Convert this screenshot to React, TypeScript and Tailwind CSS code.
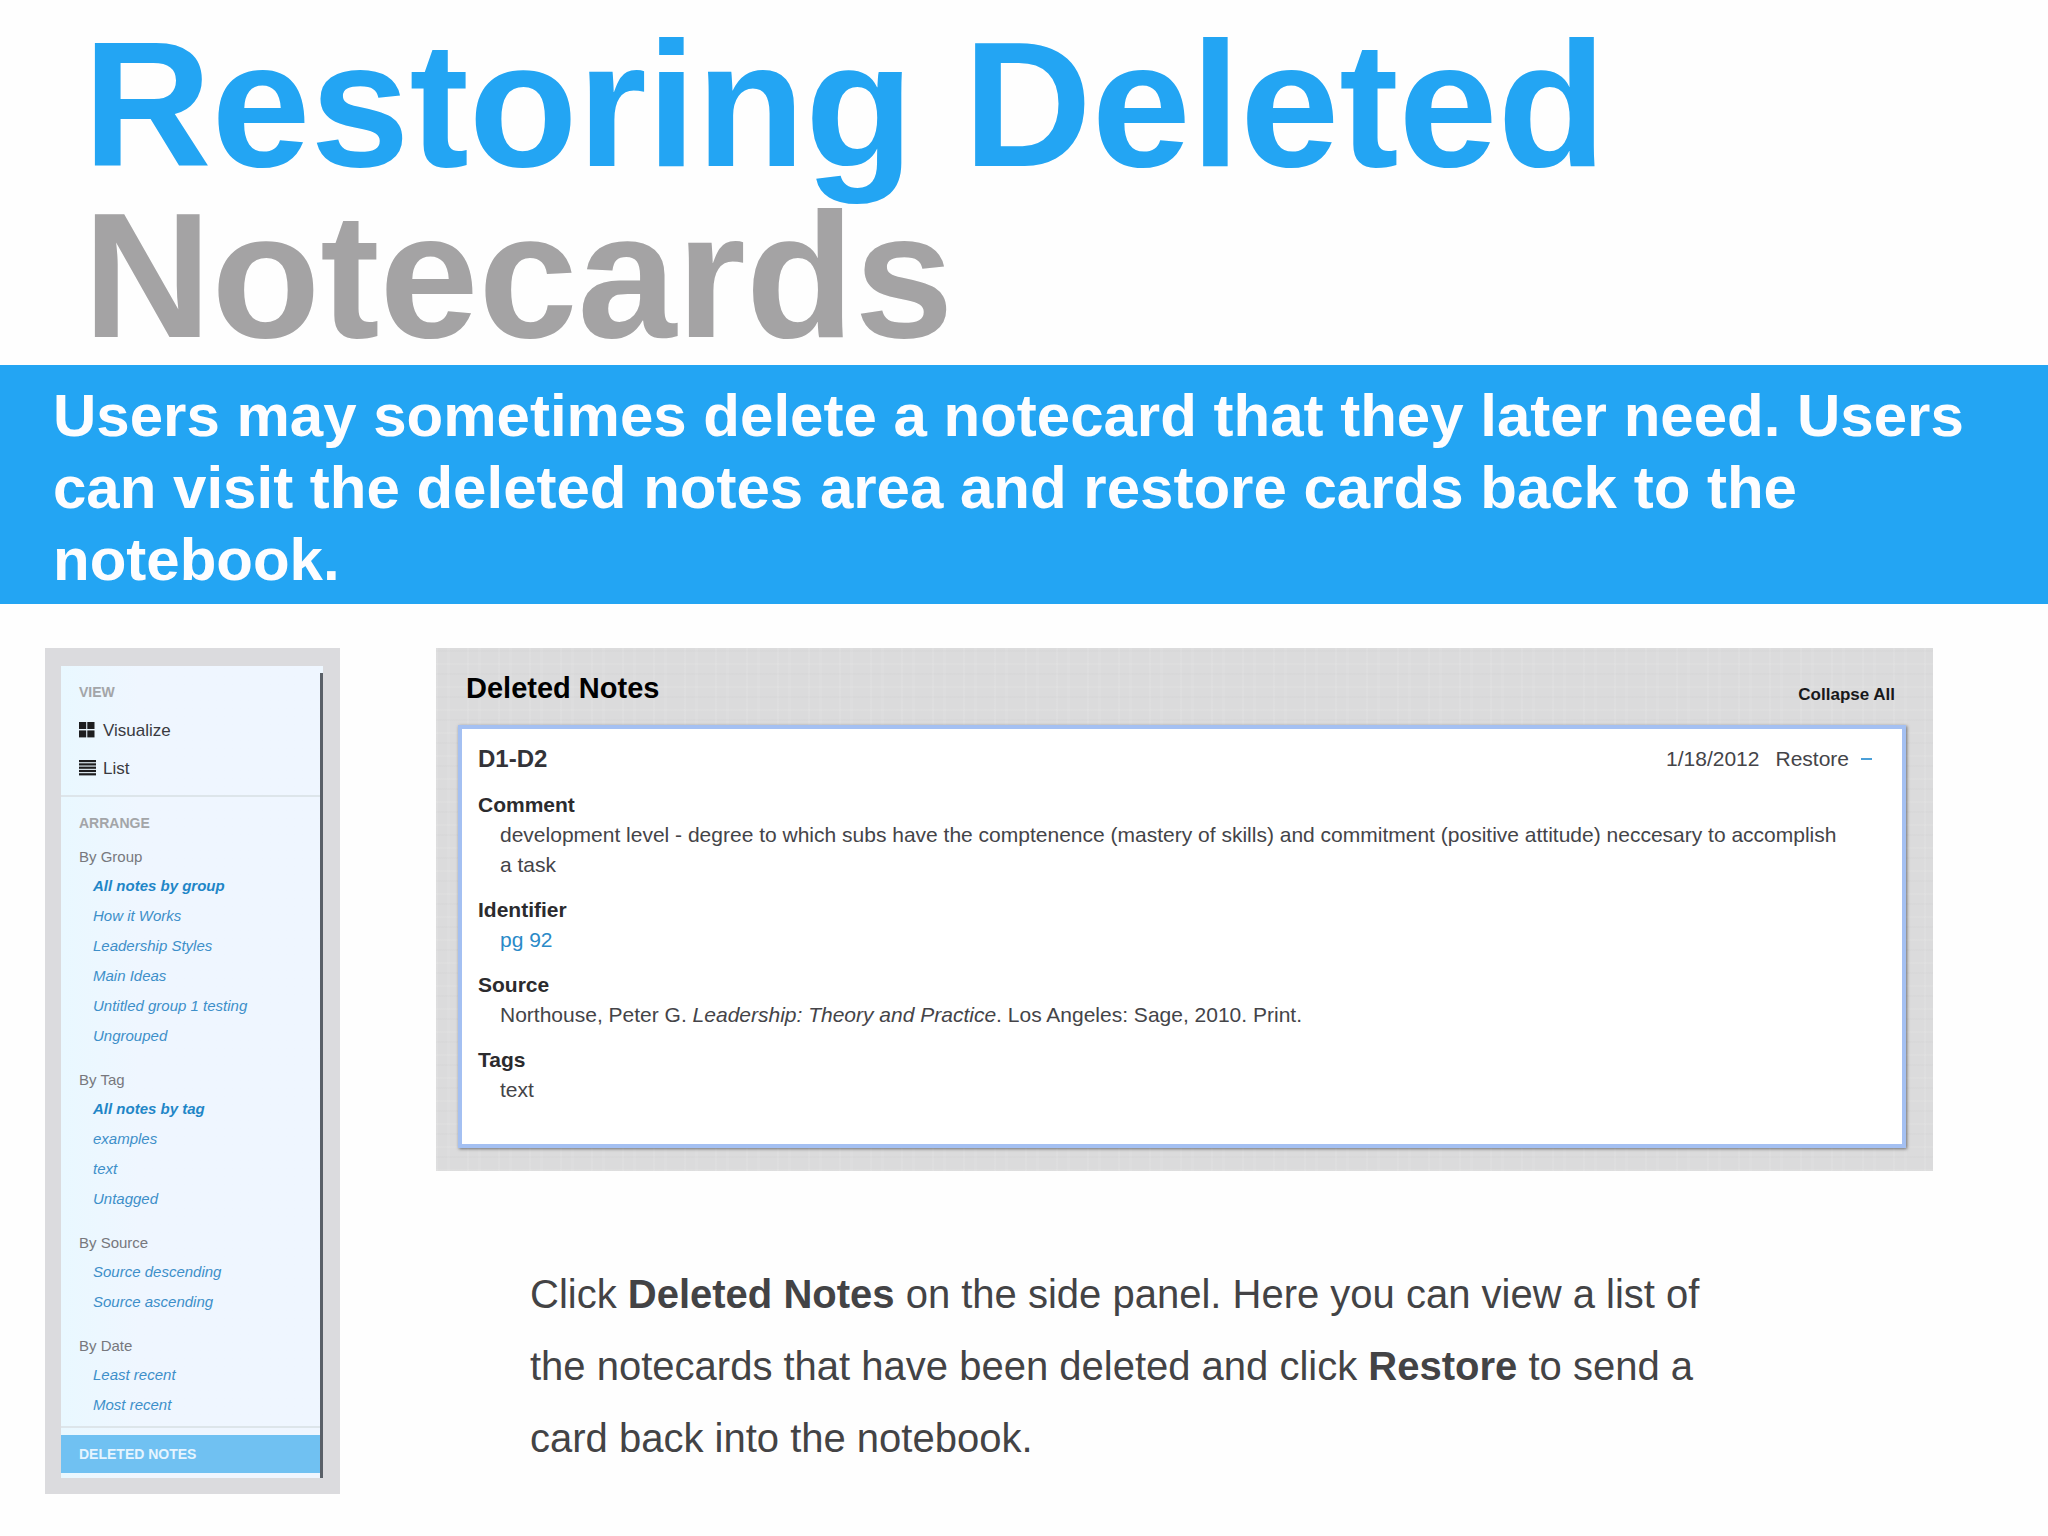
import React from "react";

type Group = { title: string; items: string[]; strongFirst?: boolean };

const groups: Group[] = [
  {
    title: "By Group",
    strongFirst: true,
    items: [
      "All notes by group",
      "How it Works",
      "Leadership Styles",
      "Main Ideas",
      "Untitled group 1 testing",
      "Ungrouped",
    ],
  },
  { title: "By Tag", strongFirst: true, items: ["All notes by tag", "examples", "text", "Untagged"] },
  { title: "By Source", items: ["Source descending", "Source ascending"] },
  { title: "By Date", items: ["Least recent", "Most recent"] },
];

function GridIcon() {
  return (
    <svg width="17" height="19" viewBox="0 0 17 19" fill="#1d1d1f" aria-hidden="true">
      <rect x="0" y="0" width="7.2" height="7" />
      <rect x="8.3" y="0" width="7.2" height="7" />
      <rect x="0" y="8.4" width="7.2" height="7" />
      <rect x="8.3" y="8.4" width="7.2" height="7" />
    </svg>
  );
}

function ListIcon() {
  return (
    <svg width="17" height="19" viewBox="0 0 17 19" fill="#1d1d1f" aria-hidden="true">
      <rect x="0" y="0" width="17" height="2.2" />
      <rect x="0" y="3.3" width="17" height="2.2" />
      <rect x="0" y="6.6" width="17" height="2.2" />
      <rect x="0" y="9.9" width="17" height="2.2" />
      <rect x="0" y="13.2" width="17" height="2.2" />
    </svg>
  );
}

function Sidebar() {
  return (
    <aside className="w-[295px] shrink-0 bg-[#dbdbde] pt-[18px] pr-[17px] pb-4 pl-4">
      <div className="flex bg-[#eef7ff]">
        <nav className="min-w-0 flex-1 bg-linear-to-r from-[#e9f8ff] to-[#eff6ff] to-30% pt-4 pb-[5px]">
          <h2 className="px-[18px] text-[14px] leading-5 font-bold text-[#a3a5a8]">VIEW</h2>
          <ul className="mt-[10px] px-[18px] text-[17px] leading-[38px] text-[#3a3a40]">
            <li>
              <a href="#visualize" className="flex items-center gap-[7px]">
                <GridIcon />
                Visualize
              </a>
            </li>
            <li>
              <a href="#list" className="flex items-center gap-[7px]">
                <ListIcon />
                List
              </a>
            </li>
          </ul>
          <hr className="mt-[7px] border-t-2 border-[#dde5ea]" />
          <h2 className="mt-4 px-[18px] text-[14px] leading-5 font-bold text-[#a3a5a8]">ARRANGE</h2>
          <div className="mt-[10px] flex flex-col gap-[15px] px-[18px] text-[15px]">
            {groups.map((g) => (
              <section key={g.title}>
                <h3 className="leading-7 text-[#77787d]">{g.title}</h3>
                <ul className="pl-[14px] leading-[30px] text-[#3d8fc9] italic">
                  {g.items.map((item, i) => (
                    <li key={item} className={g.strongFirst && i === 0 ? "font-bold text-[#1f86c7]" : ""}>
                      <a href="#notes">{item}</a>
                    </li>
                  ))}
                </ul>
              </section>
            ))}
          </div>
          <hr className="mt-[6px] border-t-2 border-[#dde5ea]" />
          <a
            href="#deleted"
            className="mt-[7px] block bg-[#70c1f2] px-[18px] text-[14px] leading-[38px] font-bold text-[#e6f5ff]"
          >
            DELETED NOTES
          </a>
        </nav>
        <div className="mt-[7px] w-[3px] bg-[#5a6068]" />
      </div>
    </aside>
  );
}

function Field({ label, children }: { label: string; children: React.ReactNode }) {
  return (
    <div>
      <dt className="font-bold text-[#2b2b2e]">{label}</dt>
      <dd className="pl-[22px]">{children}</dd>
    </div>
  );
}

function DeletedNotes() {
  return (
    <section className="bg-[#dbdbdc] bg-[repeating-linear-gradient(90deg,rgba(255,255,255,0.08)_0_2px,transparent_2px_11px,rgba(255,255,255,0.06)_11px_14px,transparent_14px_31px),repeating-linear-gradient(0deg,rgba(255,255,255,0.07)_0_2px,transparent_2px_13px,rgba(0,0,0,0.01)_13px_15px,transparent_15px_23px)] pt-[22px] pr-[27px] pb-[23px] pl-[22px]">
      <header className="flex items-center justify-between pr-[11px] pl-2">
        <h2 className="text-[29px] leading-[36px] font-bold text-black">Deleted Notes</h2>
        <button type="button" className="pt-[14px] text-[17px] leading-[22px] font-bold text-[#18181a]">
          Collapse All
        </button>
      </header>
      <article className="mt-[19px] border-4 border-[#a4c0f2] bg-white px-4 pt-[15px] pb-[39px] text-[21px] leading-[30px] text-[#444448] shadow-[1px_1px_3px_rgba(0,0,0,0.5)]">
        <div className="flex items-center justify-between pr-[14px]">
          <h3 className="text-[24px] font-bold text-[#333338]">D1-D2</h3>
          <div className="flex items-center">
            <time dateTime="2012-01-18">1/18/2012</time>
            <button type="button" className="ml-4">
              Restore
            </button>
            <button type="button" aria-label="Collapse note" className="ml-3 flex h-[30px] items-center">
              <span className="block h-[2px] w-[11px] bg-[#4a9fd8]" />
            </button>
          </div>
        </div>
        <dl className="mt-4 flex flex-col gap-[15px] pr-[37px]">
          <Field label="Comment">
            development level - degree to which subs have the comptenence (mastery of skills) and commitment (positive
            attitude) neccesary to accomplish a task
          </Field>
          <Field label="Identifier">
            <a href="#page" className="text-[#2a8ac8]">
              pg 92
            </a>
          </Field>
          <Field label="Source">
            Northouse, Peter G. <cite className="italic">Leadership: Theory and Practice</cite>. Los Angeles: Sage, 2010.
            Print.
          </Field>
          <Field label="Tags">text</Field>
        </dl>
      </article>
    </section>
  );
}

export default function App() {
  return (
    <div className="min-h-screen bg-[#fefefe] font-['Liberation_Sans',Arial,sans-serif]">
      <h1 className="px-[83px] pt-[19px] pb-1 text-[178px] leading-[171px] font-bold text-[#23a5f3]">
        Restoring Deleted <span className="block text-[#a4a3a4]">Notecards</span>
      </h1>
      <p className="bg-[#23a5f3] pt-[15px] pr-10 pb-2 pl-[53px] text-[60px] leading-[72px] font-bold text-[#fdfdff]">
        Users may sometimes delete a notecard that they later need. Users can visit the deleted notes area and restore
        cards back to the notebook.
      </p>
      <main className="flex items-start gap-24 pt-11 pr-[115px] pb-10 pl-[45px]">
        <Sidebar />
        <div className="min-w-0 flex-1">
          <DeletedNotes />
          <p className="mt-[87px] max-w-[1368px] px-[94px] text-[40px] leading-[72px] text-[#434345]">
            Click <strong>Deleted Notes</strong> on the side panel. Here you can view a list of the notecards that have
            been deleted and click <strong>Restore</strong> to send a card back into the notebook.
          </p>
        </div>
      </main>
    </div>
  );
}
